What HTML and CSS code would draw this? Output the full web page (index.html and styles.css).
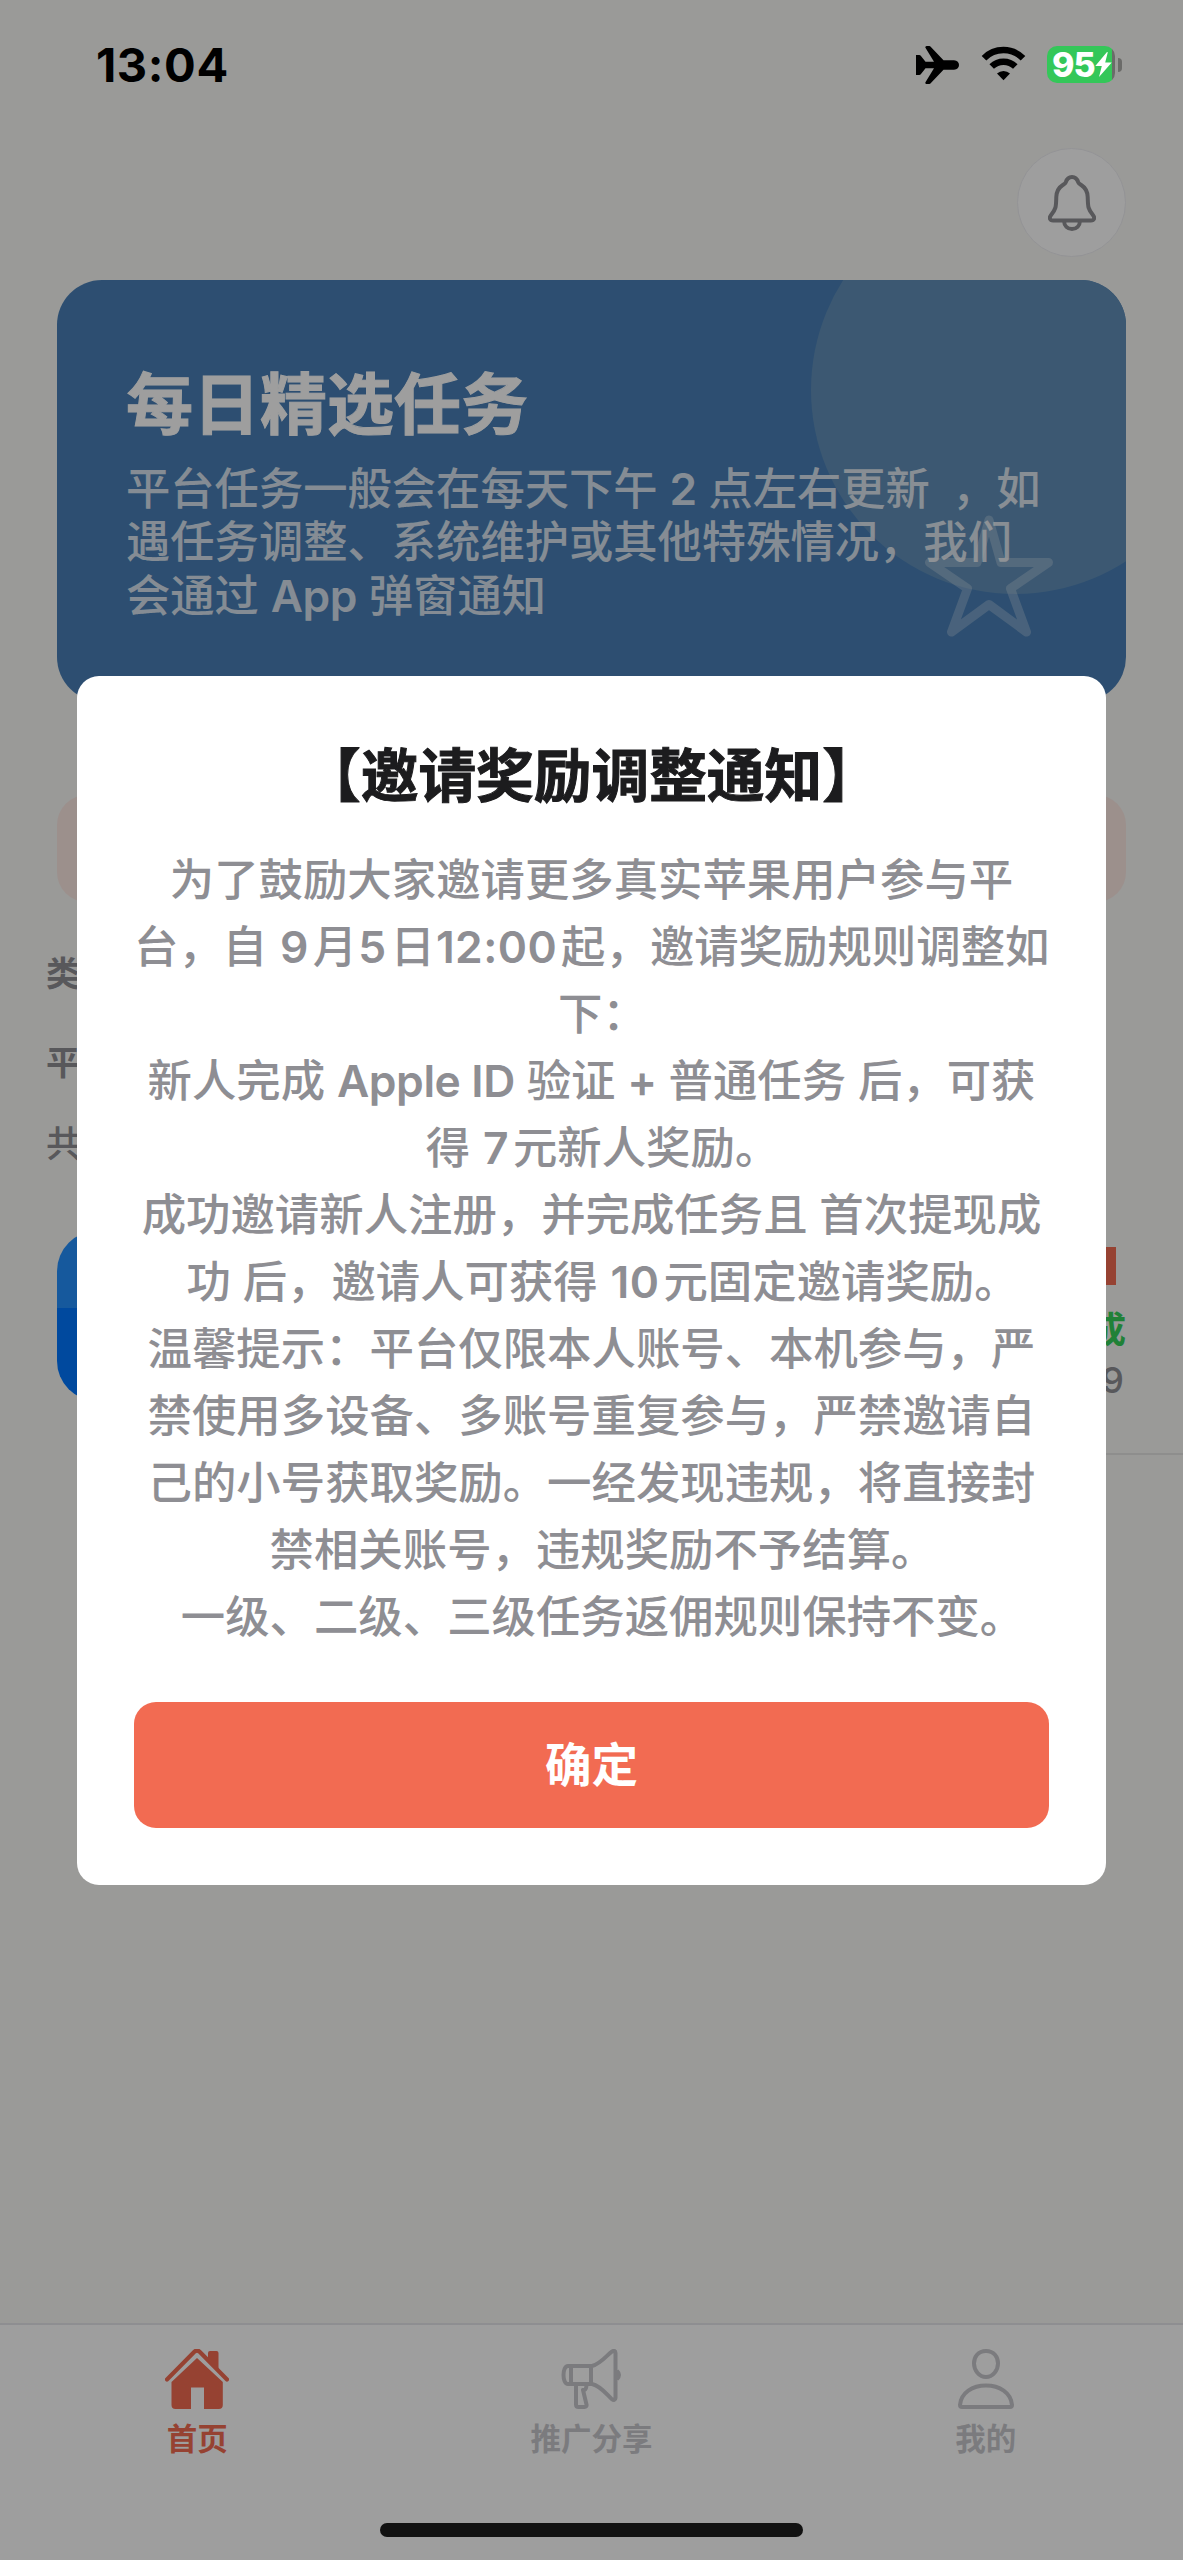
FILE: index.html
```html
<!DOCTYPE html>
<html lang="zh-CN">
<head>
<meta charset="utf-8">
<title>首页</title>
<link rel="stylesheet" href="styles.css">
</head>
<body>
<div class="screen">
  <header class="status-bar">
    <span class="time">13:04</span>
    <div class="status-icons">
      <svg class="plane" viewBox="0 0 43 38"><path d="M0 9h3.200q1 0 1.600.800l4.700 6L18 15.700 9.300 1.600Q9.200 0 10.600 0h2.600q1 0 1.700.900L27.500 14.200h10.500Q43 15 43 19t-5 4.800H27.500L14.900 37.100q-.700.900-1.700.900h-2.600q-1.400 0-1.300-1.600L18 22.300 9.500 22.200l-4.700 6q-.600.800-1.600.800H0Z"/></svg>
      <svg class="wifi" viewBox="0 0 45 35"><path d="M3 12.200A27.500 27.500 0 0 1 42 12.200M10.700 20.500A17 17 0 0 1 34.300 20.500" fill="none" stroke="#000" stroke-width="6.500"/><path d="M22.500 34.300 16 27.600a9.200 9.200 0 0 1 13 0Z"/></svg>
      <div class="battery">
        <span class="level">95</span>
        <svg class="bolt" viewBox="0 0 17 25"><path d="M12 0 .300 14h6.500L4 25 16.700 10.500h-6.500L12.800.300Z"/></svg>
        <i class="nub"></i>
      </div>
    </div>
  </header>

  <main class="content">
    <div class="toolbar">
      <button class="bell" aria-label="通知"><svg viewBox="0 0 48 56"><path d="M24 2c3.300 0 5.200 2 6.200 5.200.5 1.300 1.600 1.900 3 2.800 4.300 2.700 6.300 6.500 6.500 12 .3 9.500 0 11.500 5.200 18 2.400 3 1.200 5.500-2 5.500H5.100c-3.200 0-4.400-2.500-2-5.500C8.300 33.500 8 31.500 8.300 22c.2-5.500 2.200-9.300 6.500-12 1.400-.9 2.500-1.500 3-2.800C18.800 4 20.700 2 24 2ZM16 46c.3 5 3.500 8 8 8s7.700-3 8-8"/></svg></button>
    </div>

    <section class="banner">
      <i class="disc"></i>
      <h1>每日精选任务</h1>
      <p>平台任务一般会在每天下午 <span class="latin">2</span> 点左右更新<span class="comma">，</span>如<br>遇任务调整、系统维护或其他特殊情况，我们<br>会通过 <span class="latin">App</span> 弹窗通知</p>
      <svg class="star" viewBox="0 0 130 122"><path d="M65 5 77 47.500h47.500L86.500 73.500 102.500 117 65 89.500 27.500 117 43.500 73.500 5.500 47.500H53Z"/></svg>
    </section>

    <div class="notice"></div>
    <div class="filters">
      <b>类</b>
      <b>平</b>
      <span>共</span>
    </div>

    <article class="task">
      <div class="app-icon"></div>
      <div class="meta">
        <i class="tag"></i>
        <b>成</b>
        <span>9</span>
      </div>
    </article>
  </main>

  <nav class="tabs">
    <a class="tab active">
      <svg viewBox="0 0 64 60"><path d="M2 30.500 29.600 2.600q2.400-2.200 4.800 0L62 30.500" fill="none" stroke="currentColor" stroke-width="4.200" stroke-linecap="round"/><path d="M43 9V4q0-2 2-2h6.500q2 0 2 2v16.500ZM32 9 57.800 33v23q0 4-4 4H39V38.500H26V60H10.500q-4 0-4-4V33Z"/></svg>
      <span>首页</span>
    </a>
    <a class="tab">
      <svg class="line" viewBox="-1 0 64 60"><path d="M8 17h24C41 14.500 47 6 51.500 2.800 54 1 55.500 2 55.500 4v45c0 2-1.500 2.700-4 .800C47 46 41 37 32 35H8C2 35 2 17 8 17ZM11 17v18M31 17v18M16 35v20.500q0 2.500 2.500 2.500h6q2.500 0 2-2.500L23 41h1.500q2-1 2-6M57 22q4 4 0 8"/></svg>
      <span>推广分享</span>
    </a>
    <a class="tab">
      <svg class="line" viewBox="0 0 64 60"><path d="M32 2C24 2 20 8 20 14.500S25 28 32 28s12-7 12-13.500S40 2 32 2ZM6 56C7 43.500 18.500 36.500 32 36.500S57 43.500 58 56q0 2-2 2H8q-2 0-2-2Z"/></svg>
      <span>我的</span>
    </a>
  </nav>

  <div class="scrim">
    <div class="dialog">
      <h2>【邀请奖励调整通知】</h2>
      <div class="message">
        <div>为了鼓励大家邀请更多真实苹果用户参与平</div>
        <div>台，自 <span class="num">9</span>月<span class="num">5</span>日<span class="num">12:00</span>起，邀请奖励规则调整如</div>
        <div class="hang">下：</div>
        <div>新人完成 <span class="latin">Apple ID</span> 验证 <span class="latin">+</span> 普通任务 后，可获</div>
        <div class="hang">得 <span class="num">7</span>元新人奖励。</div>
        <div>成功邀请新人注册，并完成任务且 首次提现成</div>
        <div class="hang">功 后，邀请人可获得 <span class="num">10</span>元固定邀请奖励。</div>
        <div>温馨提示：平台仅限本人账号、本机参与，严</div>
        <div>禁使用多设备、多账号重复参与，严禁邀请自</div>
        <div>己的小号获取奖励。一经发现违规，将直接封</div>
        <div class="hang">禁相关账号，违规奖励不予结算。</div>
        <div class="hang">一级、二级、三级任务返佣规则保持不变。</div>
      </div>
      <button class="confirm">确定</button>
    </div>
  </div>
  <div class="home-indicator"></div>
</div>
</body>
</html>
```
FILE: styles.css
```css
* { box-sizing: border-box; }

body {
  margin: 0;
  background: #f8f8f5;
  font-family: Inter, "Noto Sans CJK SC", sans-serif;
  font-weight: 500;
}

h1, h2, p { margin: 0; }

button {
  border: 0;
  font-family: inherit;
}

.screen {
  position: relative;
  display: flex;
  flex-direction: column;
  width: 1183px;
  height: 2560px;
  overflow: hidden;
}

/* Status bar */
.status-bar {
  position: relative;
  z-index: 2;
  display: flex;
  justify-content: space-between;
  height: 148px;
  padding: 46px 61px 0 96px;
}

.time {
  font-size: 47px;
  font-weight: 750;
  letter-spacing: .6px;
  line-height: 38px;
}

.status-icons {
  display: flex;
  align-items: flex-start;
}

.plane { width: 43px; height: 38px; margin-right: 22px; }
.wifi { width: 45px; height: 35px; margin-right: 21px; }

.battery {
  position: relative;
  display: flex;
  align-items: center;
  width: 68px;
  height: 37px;
  margin-right: 7px;
  padding-left: 5px;
  border-radius: 10px;
  background: linear-gradient(90deg, #34c759 65px, #6b6b69 65px);
}

.level {
  color: #fff;
  font-size: 34px;
  font-weight: 800;
  letter-spacing: -1px;
  line-height: 37px;
}

.bolt { width: 17px; height: 25px; margin-left: 0; fill: #fff; flex: none; }

.nub {
  position: absolute;
  right: -7px;
  top: 12px;
  width: 4px;
  height: 14px;
  border-radius: 0 4px 4px 0;
  background: #6b6b69;
}

/* Page content */
.content { flex: 1; }

.toolbar {
  display: flex;
  justify-content: flex-end;
  padding-right: 57px;
}

.bell {
  display: flex;
  align-items: center;
  justify-content: center;
  width: 109px;
  height: 109px;
  padding: 0;
  border: 1px solid #eeeef2;
  border-radius: 50%;
  background: #fff;
}

.bell svg {
  width: 48px;
  height: 56px;
  fill: none;
  stroke: #8e8e93;
  stroke-width: 4;
}

.banner {
  position: relative;
  height: 422px;
  margin: 23px 57px 0;
  padding: 80px 70px 0 69px;
  overflow: hidden;
  border-radius: 45px;
  background: #497fb6;
  color: #fff;
}

.disc {
  position: absolute;
  left: 754px;
  top: -94px;
  width: 408px;
  height: 408px;
  border-radius: 50%;
  background: #618fb9;
}

.banner h1 {
  position: relative;
  font-size: 67px;
  font-weight: 700;
  line-height: 90px;
  -webkit-text-stroke: 1px currentColor;
}

.banner p {
  position: relative;
  margin-top: 13px;
  color: rgba(255, 255, 255, .78);
  font-size: 44.300px;
  line-height: 53.300px;
  white-space: nowrap;
}

.latin { font-weight: 600; letter-spacing: -.4px; }
.comma { padding: 0 0 0 22px; }

.star {
  position: absolute;
  left: 867px;
  top: 235px;
  width: 130px;
  height: 122px;
  fill: none;
  stroke: rgba(255, 255, 255, .25);
  stroke-width: 9;
  stroke-linejoin: round;
}

.notice {
  height: 107px;
  margin: 93px 57px 0;
  border-radius: 30px;
  background: #fce8e3;
}

.filters {
  display: flex;
  flex-direction: column;
  padding: 47px 46px 0;
  color: #8e8e93;
  font-size: 34px;
  line-height: 50px;
}

.filters b { height: 50px; margin-bottom: 39px; }
.filters span { margin-top: -8px; font-size: 36px; }

.task {
  display: flex;
  height: 245px;
  margin-top: 41px;
  padding-left: 57px;
}

.app-icon {
  width: 170px;
  height: 170px;
  margin-top: 21px;
  border-radius: 40px;
  background: linear-gradient(#2590fd 77px, #0077ff 77px);
}

.meta {
  flex: 1;
  display: flex;
  flex-direction: column;
  align-items: flex-end;
  margin-left: 30px;
  padding: 37px 57px 0 0;
  border-bottom: 2px solid #e6e6e4;
  color: #8e8e93;
  font-size: 36px;
}

.tag { width: 60px; height: 38px; margin-right: 10px; background: #f26b52; }
.meta b { margin-top: 20px; color: #34d05a; line-height: 50px; }
.meta span { margin-right: 2px; line-height: 50px; }

/* Tab bar */
.tabs {
  display: grid;
  grid-template-columns: repeat(3, 1fr);
  height: 237px;
  border-top: 2px solid #e5e5ea;
  background: #fff;
}

.tab {
  display: flex;
  flex-direction: column;
  align-items: center;
  padding-top: 24px;
  color: #c7c7cc;
  font-size: 30.500px;
  font-weight: 700;
  line-height: 40px;
}

.tab svg { width: 64px; height: 60px; margin-bottom: 10px; fill: currentColor; }
.tab .line { fill: none; stroke: currentColor; stroke-width: 4; stroke-linejoin: round; }
.tab.active { color: #f26b52; }

.home-indicator {
  position: absolute;
  z-index: 2;
  left: 380px;
  bottom: 23px;
  width: 423px;
  height: 14px;
  border-radius: 7px;
  background: #121212;
}

/* Announcement dialog */
.scrim {
  position: absolute;
  inset: 0;
  z-index: 1;
  display: flex;
  align-items: center;
  justify-content: center;
  background: rgba(0, 0, 0, .38);
}

.dialog {
  width: 1029px;
  height: 1209px;
  padding: 65px 57px 0;
  border-radius: 22px;
  background: #fff;
  text-align: center;
}

.dialog h2 {
  color: #1c1c1e;
  font-size: 57.700px;
  font-weight: 700;
  line-height: 70px;
  white-space: nowrap;
  -webkit-text-stroke: 1px currentColor;
}

.message {
  margin-top: 36px;
  color: #8e8e93;
  font-size: 44.400px;
  line-height: 67px;
  white-space: nowrap;
}

.message div { height: 67px; }

.message .hang { margin-right: -22px; }

.num {
  padding: 0 4px 0 1px;
  font-weight: 600;
  letter-spacing: .4px;
}

.confirm {
  display: flex;
  align-items: center;
  justify-content: center;
  width: 100%;
  height: 126px;
  margin-top: 51px;
  padding: 0 0 7px;
  border-radius: 22px;
  background: #f26b52;
  color: #fff;
  font-size: 46.500px;
  font-weight: 700;
}
```
